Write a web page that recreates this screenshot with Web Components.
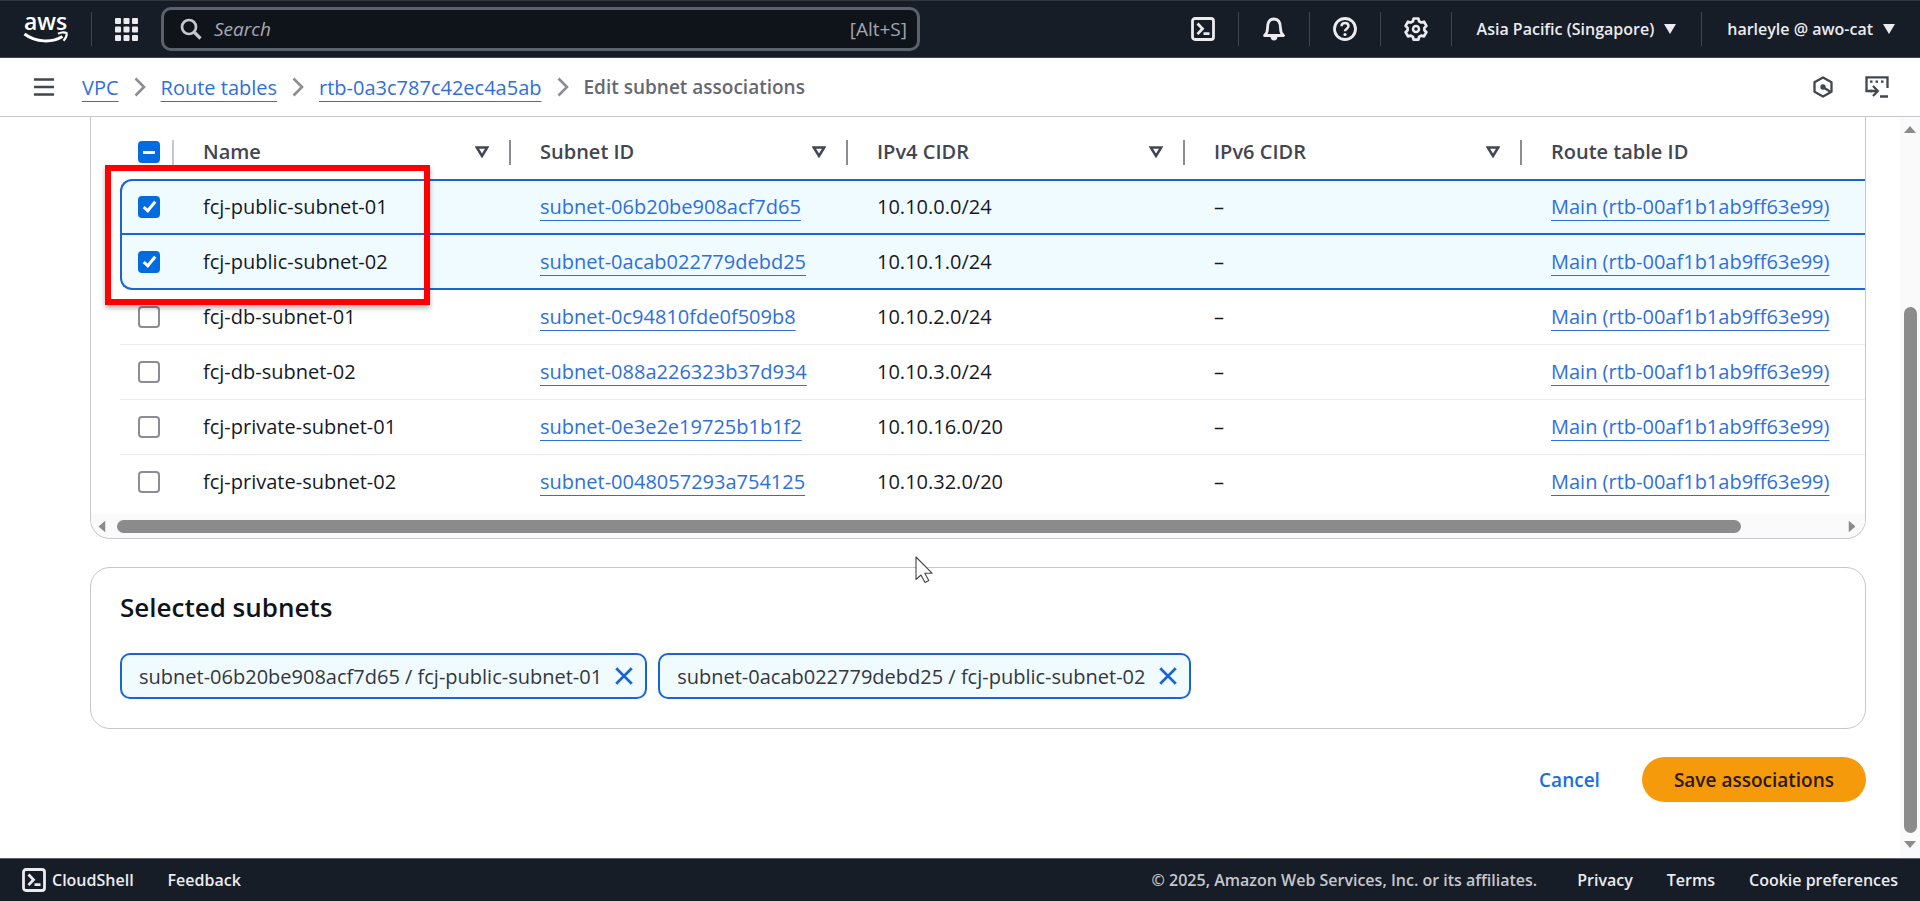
<!DOCTYPE html>
<html lang="en">
<head>
<meta charset="utf-8">
<title>Edit subnet associations | VPC Console</title>
<style>
  body { margin: 0; background: #fff; font-family: "Open Sans", "Noto Sans", sans-serif; font-size: 20px; color: #16191f; }
</style>
</head>
<body>
<vpc-console></vpc-console>
<script>
const ICONS = {
  grid: ['0 0 23 23', '<g fill="currentColor"><rect x="0" y="0" width="6" height="6" rx="1"/><rect x="8.500" y="0" width="6" height="6" rx="1"/><rect x="17" y="0" width="6" height="6" rx="1"/><rect x="0" y="8.500" width="6" height="6" rx="1"/><rect x="8.500" y="8.500" width="6" height="6" rx="1"/><rect x="17" y="8.500" width="6" height="6" rx="1"/><rect x="0" y="17" width="6" height="6" rx="1"/><rect x="8.500" y="17" width="6" height="6" rx="1"/><rect x="17" y="17" width="6" height="6" rx="1"/></g>'],
  search: ['0 0 22 22', '<circle cx="9" cy="9" r="7" fill="none" stroke="currentColor" stroke-width="2.700"/><path d="M14 14l6.500 6.500" stroke="currentColor" stroke-width="3.200"/>'],
  shell: ['0 0 24 24', '<rect x="1.500" y="1.500" width="21" height="21" rx="2.500" fill="none" stroke="currentColor" stroke-width="2.800"/><path d="M6.500 6.500l5 5.300-5 5.300M12.500 16.700h6" fill="none" stroke="currentColor" stroke-width="2.800"/>'],
  bell: ['0 0 24 24', '<path d="M2.500 18.500c2.300-1.800 3-3.800 3-7.300C5.500 5.500 7.800 2 12 2s6.500 3.500 6.500 9.200c0 3.500.7 5.500 3 7.300z" fill="none" stroke="currentColor" stroke-width="2.800" stroke-linejoin="round"/><path d="M8.500 19.500h7c0 2.500-1.500 4-3.500 4s-3.500-1.500-3.500-4z" fill="currentColor"/>'],
  help: ['0 0 24 24', '<circle cx="12" cy="12" r="10.500" fill="none" stroke="currentColor" stroke-width="2.800"/><path d="M8.500 9.300c0-2 1.500-3.300 3.500-3.300s3.500 1.300 3.500 3.100c0 2.600-3.500 2.600-3.500 5.200" fill="none" stroke="currentColor" stroke-width="2.500"/><circle cx="12" cy="17.500" r="1.600" fill="currentColor"/>'],
  gear: ['0 0 24 24', '<path d="M9.600 1.500h4.800l.7 2.800 2.100 1.200 2.800-.8 2.400 4.200-2 2v2.300l2 2-2.400 4.200-2.800-.8-2.100 1.200-.7 2.800H9.600l-.7-2.800-2.100-1.200-2.800.8-2.400-4.200 2-2v-2.300l-2-2L4 4.700l2.800.8 2.100-1.200z" fill="none" stroke="currentColor" stroke-width="2.700" stroke-linejoin="round"/><circle cx="12" cy="12" r="3" fill="none" stroke="currentColor" stroke-width="2.500"/>'],
  caret: ['0 0 12 10', '<path d="M0 0h12L6 10z" fill="currentColor"/>'],
  sort: ['0 0 14 12', '<path d="M1.800 1.500h10.400L7 10z" fill="none" stroke="currentColor" stroke-width="2.500"/>'],
  menu: ['0 0 20 18', '<path d="M0 1.500h20M0 9h20M0 16.500h20" stroke="currentColor" stroke-width="2.400"/>'],
  chevron: ['0 0 12 20', '<path d="M1.500 1.500L10 10l-8.500 8.500" fill="none" stroke="currentColor" stroke-width="2.600"/>'],
  hexagon: ['0 0 20 22', '<path d="M10 1.500l8.500 4.700v9.600L10 20.500l-8.500-4.700V6.200z" fill="none" stroke="currentColor" stroke-width="2.300" stroke-linejoin="round"/><circle cx="10" cy="11" r="2.700" fill="currentColor"/><path d="M10.500 11.500l6.500 4" stroke="currentColor" stroke-width="2.300"/>'],
  tools: ['0 0 24 22', '<path d="M7 15H1.500V1.300h21V12" fill="none" stroke="currentColor" stroke-width="2.300"/><path d="M5 5.700h2.500M10.500 5.700H13M16 5.700h2.500" stroke="currentColor" stroke-width="2.300"/><path d="M5 15h7M8 10l4.800 5-4.800 5M15 20.500h8" fill="none" stroke="currentColor" stroke-width="2.300"/>'],
  close: ['0 0 18 18', '<path d="M1.200 1.200l15.600 15.600M16.800 1.200L1.200 16.800" stroke="currentColor" stroke-width="2.700"/>'],
  arrow: ['0 0 12 7', '<path d="M6 0l6 7H0z" fill="currentColor"/>'],
  pointer: ['0 0 18 27', '<path d="M1 1v22.500l5-4.500 4 7.500 3.800-2-4-7.300H17z" fill="#fff" stroke="#444" stroke-width="1.100" stroke-linejoin="round"/>'],
};

/* Base class: clones the subclass's template into an open shadow root. */
class Part extends HTMLElement {
  constructor() {
    super();
    const t = document.createElement('template');
    t.innerHTML = '<style>*{box-sizing:border-box}button{display:inline-flex;align-items:center;font:inherit;color:inherit;background:none;border:0;padding:0;cursor:pointer}' + this.styles() + '</style>';
    this.attachShadow({ mode: 'open' }).append(t.content.cloneNode(true));
  }
  connectedCallback() {
    if (this.ready) return;
    this.ready = true;
    const t = document.createElement('template');
    t.innerHTML = this.markup();
    this.shadowRoot.append(t.content.cloneNode(true));
  }
  styles() { return ''; }
  markup() { return '<slot></slot>'; }
}

customElements.define('ui-icon', class extends Part {
  styles() { return ':host{display:block;flex:none}svg{display:block}'; }
  markup() {
    const [box, body] = ICONS[this.getAttribute('name')];
    const [, , w, h] = box.split(' ');
    return `<svg width="${w}" height="${h}" viewBox="${box}" aria-hidden="true">${body}</svg>`;
  }
});

customElements.define('top-nav', class extends Part {
  styles() { return `
    :host{display:flex;align-items:center;gap:23px;height:58px;padding:0 23px 0 24px;background:#161d26;border-top:1px solid #33383e;color:#ebebf0;font-size:16px;font-weight:600;border-bottom:1px solid #424650}
    .sep{width:1px;height:34px;background:#414750;flex:none}
    .logo{display:block;color:#fff}.logo svg{display:block;overflow:visible}
    .logo text{font-family:"Open Sans",sans-serif;font-size:23px;font-weight:600;fill:currentColor}
    .menu{gap:10px;padding:0 2px;white-space:nowrap}
    .search{display:flex;align-items:center;gap:12px;flex:0 1 759px;height:44px;padding:0 10px 0 16px;background:#0f141a;border:3px solid #5c616b;border-radius:10px;color:#c6c6cd;font-size:19px;font-weight:400}
    input{flex:1;min-width:0;border:0;outline:0;background:none;font:inherit;color:inherit;padding:0}
    input::placeholder{color:#a9a9b0;font-style:italic;opacity:1}
    kbd{font:inherit;color:#a4a4ad}
    .right{display:flex;align-items:center;gap:23px;margin-left:auto}`; }
  markup() { return `
    <a class="logo" href="#" aria-label="AWS home"><svg width="44" height="32" viewBox="0 0 44 32"><text x="0" y="17">aws</text><path d="M0.500 21C12 29.500 28 30 38.500 23.500" fill="none" stroke="currentColor" stroke-width="3"/><path d="M34 20.700c3-1.500 7-1.500 8.500-.700.5 2-1 5.500-3 7.700" fill="none" stroke="currentColor" stroke-width="2.200"/></svg></a>
    <span class="sep"></span>
    <button aria-label="Services"><ui-icon name="grid"></ui-icon></button>
    <label class="search"><ui-icon name="search"></ui-icon><input type="text" aria-label="Search" placeholder="Search"><kbd>[Alt+S]</kbd></label>
    <div class="right">
      <button aria-label="CloudShell"><ui-icon name="shell"></ui-icon></button><span class="sep"></span>
      <button aria-label="Notifications"><ui-icon name="bell"></ui-icon></button><span class="sep"></span>
      <button aria-label="Support"><ui-icon name="help"></ui-icon></button><span class="sep"></span>
      <button aria-label="Settings"><ui-icon name="gear"></ui-icon></button><span class="sep"></span>
      <button class="menu">Asia Pacific (Singapore)<ui-icon name="caret"></ui-icon></button><span class="sep"></span>
      <button class="menu">harleyle @ awo-cat<ui-icon name="caret"></ui-icon></button>
    </div>`; }
});

customElements.define('crumb-bar', class extends Part {
  styles() { return `
    :host{display:flex;align-items:center;height:59px;padding:0 31px 0 34px;border-bottom:1px solid #c6c6cd;color:#424650}
    nav{display:flex;align-items:center;gap:15px;margin-left:28px}
    nav ui-icon{color:#8c8c94}
    a{color:#2f6fdb;text-decoration:underline;text-decoration-thickness:1px;text-underline-offset:6px;text-decoration-skip-ink:none}
    span{color:#656871;font-size:19px;font-weight:600}
    .tools{display:flex;gap:32px;margin-left:auto}`; }
  markup() { return `
    <button aria-label="Open navigation"><ui-icon name="menu"></ui-icon></button>
    <nav aria-label="Breadcrumbs">
      <a href="#">VPC</a><ui-icon name="chevron"></ui-icon>
      <a href="#">Route tables</a><ui-icon name="chevron"></ui-icon>
      <a href="#">rtb-0a3c787c42ec4a5ab</a><ui-icon name="chevron"></ui-icon>
      <span>Edit subnet associations</span>
    </nav>
    <div class="tools"><button aria-label="Diagnostics"><ui-icon name="hexagon"></ui-icon></button><button aria-label="Tutorials"><ui-icon name="tools"></ui-icon></button></div>`; }
});

customElements.define('scroll-track', class extends Part {
  styles() { return `
    :host{display:flex;align-items:center;background:#fafafa;color:#8b8b8b}
    :host([vertical]){flex-direction:column;width:20px;padding:9px 0 10px;gap:8px}
    :host(:not([vertical])){height:24px;padding:0 7px 0 5px;gap:9px}
    .rail{flex:1;display:flex;align-self:stretch;align-items:center}
    :host([vertical]) .rail{flex-direction:column}
    .thumb{border-radius:7px;background:#8b8b8b}
    :host([vertical]) .thumb{width:13px;flex:526}
    :host(:not([vertical])) .thumb{height:13px;flex:1624}
    .before{flex:var(--before,0)}.after{flex:var(--after,0)}
    :host(:not([vertical])) .start{transform:rotate(-90deg)}
    :host(:not([vertical])) .end{transform:rotate(90deg)}
    :host([vertical]) .end{transform:rotate(180deg)}`; }
  markup() { return `<ui-icon class="start" name="arrow"></ui-icon><div class="rail"><i class="before"></i><div class="thumb"></div><i class="after"></i></div><ui-icon class="end" name="arrow"></ui-icon>`; }
});

customElements.define('subnet-table', class extends Part {
  styles() { return `
    :host{display:block;position:relative;border:1px solid #c6c6cd;border-top:0;border-radius:0 0 20px 20px}
    .clip{overflow:hidden;border-radius:0 0 19px 19px;padding-top:8px}
    .rows{padding:0 0 5px 29px}
    table{width:100%;table-layout:fixed;border-collapse:separate;border-spacing:0;text-align:left}
    .pick{width:54px}.data{width:337px}
    th,td{padding:0 0 0 29px;line-height:28px;white-space:nowrap}
    th{height:54px;color:#424650;font-weight:600}
    th:first-child,td:first-child{padding-left:18px}
    .head{display:flex;align-items:center;height:28px}
    .head button{margin-left:auto;margin-right:20px}
    .head i{width:2px;height:25px;background:#8c8c94}
    .head .thin{margin-left:auto;background:#c6c6cd}
    td{height:55px;border-bottom:1px solid #ebebf0}
    tr:last-child td{height:54px;border-bottom:0}
    .on td{background:#f0fbff;border-top:2px solid #1a65d0;border-bottom:0;height:54px}
    .on.last td{border-bottom:2px solid #1a65d0;height:57px}
    .on td:first-child{border-left:2px solid #1a65d0;padding-left:16px}
    .on.first td:first-child{border-top-left-radius:12px}
    .on.last td:first-child{border-bottom-left-radius:12px}
    a{color:#2f6fdb;text-decoration:underline;text-decoration-thickness:1px;text-underline-offset:6px;text-decoration-skip-ink:none}
    input{appearance:none;display:block;position:relative;width:22px;height:22px;margin:0;border:2px solid #8c8c94;border-radius:4px;background:#fff}
    input:checked,input:indeterminate{background:#006ce0;border-color:#006ce0}
    input:checked::after{content:"";position:absolute;left:6px;top:1px;width:7px;height:13px;border:solid #fff;border-width:0 3px 3px 0;transform:rotate(40deg);box-sizing:border-box}
    input:indeterminate::after{content:"";position:absolute;left:3px;top:8px;width:12px;height:3px;background:#fff}
    .mark{position:absolute;left:14px;top:48px;width:325px;height:140px;border:6px solid #f00;box-shadow:0 3px 5px rgba(0,0,0,.3);pointer-events:none}`; }
  markup() {
    const rows = [
      ['fcj-public-subnet-01', 'subnet-06b20be908acf7d65', '10.10.0.0/24', 'on first'],
      ['fcj-public-subnet-02', 'subnet-0acab022779debd25', '10.10.1.0/24', 'on last'],
      ['fcj-db-subnet-01', 'subnet-0c94810fde0f509b8', '10.10.2.0/24', ''],
      ['fcj-db-subnet-02', 'subnet-088a226323b37d934', '10.10.3.0/24', ''],
      ['fcj-private-subnet-01', 'subnet-0e3e2e19725b1b1f2', '10.10.16.0/20', ''],
      ['fcj-private-subnet-02', 'subnet-0048057293a754125', '10.10.32.0/20', ''],
    ];
    const th = n => `<th scope="col"><div class="head">${n}<button aria-label="Sort by ${n}"><ui-icon name="sort"></ui-icon></button><i></i></div></th>`;
    return `<div class="clip"><div class="rows"><table>
      <colgroup><col class="pick"><col class="data"><col class="data"><col class="data"><col class="data"><col></colgroup>
      <thead><tr><th scope="col"><div class="head"><input type="checkbox" id="all" aria-label="Select all subnets"><i class="thin"></i></div></th>${['Name', 'Subnet ID', 'IPv4 CIDR', 'IPv6 CIDR'].map(th).join('')}<th scope="col"><div class="head">Route table ID</div></th></tr></thead>
      <tbody>${rows.map(([n, id, ip, c], i) => `<tr class="${c}"><td><input type="checkbox" id="r${i}"${c ? ' checked' : ''}></td><td><label for="r${i}">${n}</label></td><td><a href="#">${id}</a></td><td>${ip}</td><td>–</td><td><a href="#">Main (rtb-00af1b1ab9ff63e99)</a></td></tr>`).join('')}</tbody>
      </table></div><scroll-track style="--after:96"></scroll-track></div><div class="mark"></div>`;
  }
  connectedCallback() {
    super.connectedCallback();
    this.shadowRoot.getElementById('all').indeterminate = true;
  }
});

customElements.define('subnet-token', class extends Part {
  styles() { return `
    :host{display:flex;align-items:center;gap:13px;height:46px;padding:0 12px 0 17px;border:2px solid #1a65d0;border-radius:10px;background:#f0fbff;color:#33373d;white-space:nowrap}
    button{color:#1a65d0}`; }
  markup() { return '<span><slot></slot></span><button aria-label="Remove"><ui-icon name="close"></ui-icon></button>'; }
});

customElements.define('selected-subnets', class extends Part {
  styles() { return `
    :host{display:block;position:relative;border:1px solid #c6c6cd;border-radius:20px;padding:22px 29px 29px}
    h2{margin:0 0 29px;font-size:26px;line-height:34px;font-weight:600;color:#0f141a}
    div{display:flex;flex-wrap:wrap;gap:11px}
    .pointer{position:absolute;left:824px;top:-12px}`; }
  markup() { return '<h2>Selected subnets</h2><div><slot></slot></div><ui-icon class="pointer" name="pointer"></ui-icon>'; }
});

customElements.define('form-actions', class extends Part {
  styles() { return `
    :host{display:flex;justify-content:flex-end;align-items:center;gap:42px;font-weight:600;font-size:19px}
    a{color:#1a6ee0;text-decoration:none}
    button{height:45px;padding:0 32px;border-radius:23px;background:#f59a0b;color:#2b1a00}`; }
  markup() { return '<a href="#">Cancel</a><button>Save associations</button>'; }
});

customElements.define('console-footer', class extends Part {
  styles() { return `
    :host{display:flex;align-items:center;gap:34px;height:43px;padding:0 22px;background:#161d26;color:#ebebf0;font-size:16px;font-weight:600;border-top:1px solid #5c616b;white-space:nowrap}
    button{gap:6px}
    a{color:inherit;text-decoration:none}
    span{margin-left:auto;color:#c6c6cd;margin-right:6px}`; }
  markup() { return '<button><ui-icon name="shell"></ui-icon>CloudShell</button><a href="#">Feedback</a><span>© 2025, Amazon Web Services, Inc. or its affiliates.</span><a href="#">Privacy</a><a href="#">Terms</a><a href="#">Cookie preferences</a>'; }
});

customElements.define('vpc-console', class extends Part {
  styles() { return `
    :host{display:flex;flex-direction:column;min-height:100vh}
    main{flex:1;display:flex}
    section{flex:1;min-width:0;display:flex;flex-direction:column;gap:28px;padding:0 34px 28px 90px}`; }
  markup() { return `
    <top-nav></top-nav><crumb-bar></crumb-bar>
    <main>
      <section>
        <subnet-table></subnet-table>
        <selected-subnets>
          <subnet-token>subnet-06b20be908acf7d65 / fcj-public-subnet-01</subnet-token>
          <subnet-token>subnet-0acab022779debd25 / fcj-public-subnet-02</subnet-token>
        </selected-subnets>
        <form-actions></form-actions>
      </section>
      <scroll-track vertical style="--before:166"></scroll-track>
    </main>
    <console-footer></console-footer>`; }
});
</script>
</body>
</html>
